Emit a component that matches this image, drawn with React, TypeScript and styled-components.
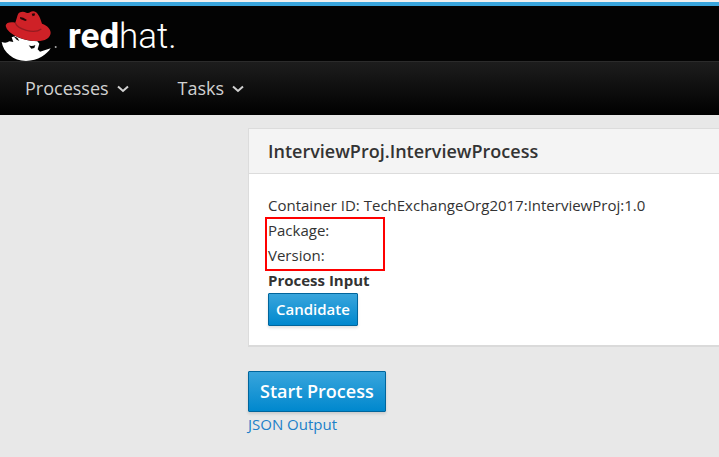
import React from "react";
import styled, { createGlobalStyle } from "styled-components";

const GlobalStyle = createGlobalStyle`
  *, *::before, *::after { box-sizing: border-box; }
  body {
    margin: 0;
    background: #e8e8e8;
    color: #333;
    font-family: "Open Sans", "Liberation Sans", sans-serif;
    font-size: 15px;
    line-height: 25px;
    overflow-x: hidden;
  }
`;

const Header = styled.header`
  border-top: 2px solid #f0f0f0;
  background: #000;
`;

const Brand = styled.div`
  display: flex;
  align-items: center;
  height: 59px;
  border-top: 4px solid #39a5dc;
  background: #030303;
  color: #fff;
`;

const Wordmark = styled.span`
  margin-left: 10px;
  padding-top: 6px;
  font-family: Roboto, "Liberation Sans", sans-serif;
  font-size: 35px;
  font-weight: 300;
  line-height: 40px;

  strong { font-weight: 700; }
`;

const Nav = styled.nav`
  display: flex;
  gap: 49px;
  height: 54px;
  padding: 0 25px;
  border-top: 1px solid #2b2b2b;
  background: linear-gradient(#1d1d1d, #000);
`;

const NavItem = styled.button`
  display: flex;
  align-items: center;
  gap: 8px;
  padding: 0;
  border: 0;
  background: none;
  color: #d1d1d1;
  font: inherit;
  font-size: 18px;
  cursor: pointer;
`;

const Main = styled.main`
  padding: 13px 0 20px 248px;
`;

const Card = styled.section`
  margin-bottom: 24px;
  border: 1px solid #dcdcdc;
  border-right: 0;
  border-bottom: 2px solid #dadada;
  background: #fff;
`;

const CardTitle = styled.h1`
  margin: 0;
  padding: 10px 19px 9px;
  border-bottom: 1px solid #dcdcdc;
  background: #f4f4f4;
  font-size: 18px;
  font-weight: 600;
  line-height: 25px;
`;

const CardBody = styled.div`
  padding: 19px;
`;

const Line = styled.p`
  margin: 0;
`;

const Highlighted = styled.div`
  position: relative;

  &::after {
    content: "";
    position: absolute;
    top: -1px;
    left: -3px;
    width: 120px;
    height: 54px;
    border: 2px solid #f00;
    pointer-events: none;
  }
`;

const Subheading = styled.h2`
  margin: 0;
  font-size: 15px;
  font-weight: 700;
  line-height: 25px;
`;

const PrimaryButton = styled.button<{ $large?: boolean }>`
  display: block;
  padding: ${(p) => (p.$large ? "7px 11px" : "3px 7px")};
  border: 1px solid #00659c;
  border-radius: 1px;
  background: linear-gradient(#39a5dc, #0088ce);
  box-shadow: 0 2px 3px rgba(0, 0, 0, 0.12);
  color: #fff;
  font: inherit;
  font-size: ${(p) => (p.$large ? "18px" : "15px")};
  font-weight: 600;
  cursor: pointer;
`;

const OutputLink = styled.a`
  color: #2080c8;
  text-decoration: none;
`;

const Hat = () => (
  <svg width="58" height="55" viewBox="0 18 174 165" role="img" aria-label="Red Hat">
    <path
      fill="#fff"
      d="M5 126 C15 130 22 128 28 124 L40 126 L35 112 L46 108 C62 116 84 123 112 124 L118 131 L113 148 L120 155 L152 145 C142 162 114 183 78 183 C40 182 10 158 5 126Z"
    />
    <path fill="#050505" d="M86 136 C93 139 100 138 106 135 L103 144 L94 146Z M40 108 L52 113 L58 123 L50 119Z" />
    <path
      fill="#cf2127"
      d="M17 77 C18 68 30 65 46 68 L53 45 C56 36 68 33 79 38 C89 42 92 32 101 34 C114 37 119 50 126 71 C143 77 152 87 152 99 C150 116 133 124 108 123 C70 122 22 103 17 77Z"
    />
    <path fill="none" stroke="#941b20" strokeWidth="4" d="M46 69 C53 87 101 104 124 87" />
    <path fill="#240607" d="M60 51 L70 53 L81 60 L76 63 L61 57Z M95 41 L104 40 L105 46 L98 49Z" />
    <circle cx="167" cy="141" r="3" fill="#aaa" />
  </svg>
);

const Chevron = () => (
  <svg width="12" height="8" viewBox="0 0 12 8" aria-hidden="true">
    <path d="M1 1.5 L6 6 L11 1.5" fill="none" stroke="#d1d1d1" strokeWidth="2" />
  </svg>
);

const menus = ["Processes", "Tasks"];

export default function App() {
  return (
    <>
      <GlobalStyle />
      <Header>
        <Brand>
          <Hat />
          <Wordmark>
            <strong>red</strong>hat.
          </Wordmark>
        </Brand>
        <Nav>
          {menus.map((name) => (
            <NavItem key={name} type="button">
              {name}
              <Chevron />
            </NavItem>
          ))}
        </Nav>
      </Header>
      <Main>
        <Card>
          <CardTitle>InterviewProj.InterviewProcess</CardTitle>
          <CardBody>
            <Line>Container ID: TechExchangeOrg2017:InterviewProj:1.0</Line>
            <Highlighted>
              <Line>Package:</Line>
              <Line>Version:</Line>
            </Highlighted>
            <Subheading>Process Input</Subheading>
            <PrimaryButton type="button">Candidate</PrimaryButton>
          </CardBody>
        </Card>
        <PrimaryButton type="button" $large>
          Start Process
        </PrimaryButton>
        <OutputLink href="#json-output">JSON Output</OutputLink>
      </Main>
    </>
  );
}
